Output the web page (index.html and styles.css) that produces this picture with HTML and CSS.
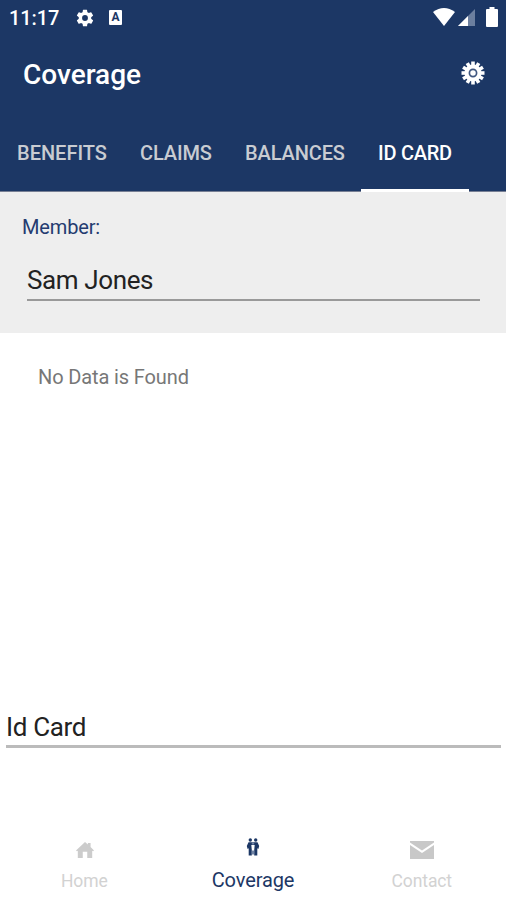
FILE: index.html
```html
<!DOCTYPE html>
<html lang="en">
<head>
<meta charset="utf-8">
<title>Coverage</title>
<link rel="stylesheet" href="styles.css">
</head>
<body>
<div class="app">
  <header class="header">
    <div class="status">
      <span class="time">11:17</span>
      <svg class="st-gear" width="20" height="20" viewBox="0 0 24 24"><path fill="#fff" fill-rule="evenodd" d="M19.4 13a7.500 7.500 0 0 0 0-2l2.100-1.650a.5.5 0 0 0 .12-.64l-2-3.460a.5.5 0 0 0-.61-.22l-2.490 1a7.300 7.300 0 0 0-1.690-.98l-.38-2.650A.49.49 0 0 0 14 2h-4a.49.49 0 0 0-.49.42l-.38 2.650c-.61.25-1.170.59-1.690.98l-2.490-1a.49.49 0 0 0-.61.22l-2 3.460a.49.49 0 0 0 .12.64L4.570 11a7.900 7.900 0 0 0 0 2l-2.110 1.650a.5.5 0 0 0-.12.64l2 3.460c.12.22.39.3.61.22l2.490-1c.52.4 1.080.73 1.690.98l.38 2.650c.03.24.24.42.49.42h4c.25 0 .46-.18.49-.42l.38-2.650c.61-.25 1.170-.59 1.690-.98l2.490 1c.23.09.49 0 .61-.22l2-3.460a.5.5 0 0 0-.12-.64zM12 15.500a3.500 3.500 0 1 1 0-7 3.500 3.500 0 0 1 0 7z"/></svg>
      <span class="badge">A</span>
      <span class="spacer"></span>
      <svg class="st-wifi" width="22" height="18" viewBox="0 0 22 18"><path fill="#fff" d="M0 4Q11-4 22 4L11 18z"/></svg>
      <svg class="st-signal" width="17" height="17" viewBox="0 0 17 17"><path fill="#6c7f9f" d="M17 0v17H0z"/><path fill="#fff" d="M10 7v10H0z"/></svg>
      <svg class="st-batt" width="12" height="20" viewBox="0 0 12 20"><path fill="#fff" d="M3.500 0h5v2H11q1 0 1 1v16q0 1-1 1H1q-1 0-1-1V3q0-1 1-1h2.500z"/></svg>
    </div>
    <div class="title-row">
      <h1 class="title">Coverage</h1>
      <svg class="settings" width="24" height="24" viewBox="-12 -12 24 24">
        <circle r="8.500" fill="#fff"/>
        <g stroke="#fff" stroke-width="3.600">
          <path d="M0-11.500V11.500"/><path d="M0-11.500V11.500" transform="rotate(30)"/><path d="M0-11.500V11.500" transform="rotate(60)"/><path d="M0-11.500V11.500" transform="rotate(90)"/><path d="M0-11.500V11.500" transform="rotate(120)"/><path d="M0-11.500V11.500" transform="rotate(150)"/>
        </g>
        <circle r="3.600" fill="#fff" stroke="#405780" stroke-width="1.700"/>
      </svg>
    </div>
    <nav class="tabs">
      <span class="tab benefits">BENEFITS</span>
      <span class="tab claims">CLAIMS</span>
      <span class="tab balances">BALANCES</span>
      <span class="tab id-card">ID CARD</span>
    </nav>
  </header>
  <section class="member">
    <div><span class="member-label">Member:</span></div>
    <div class="member-field"><span class="member-name">Sam Jones</span></div>
  </section>
  <main class="content">
    <div><span class="empty">No Data is Found</span></div>
    <div class="card-field"><span class="card-name">Id Card</span></div>
  </main>
  <footer class="bottom">
    <div class="item">
      <svg class="house" width="18" height="18" viewBox="0 0 20 18"><path fill="#ccc" d="M0 9.500L10 0l3.200 3V1.300h3v4.500L20 9.500l-1 1-1-.8V18h-5.500v-7h-5v7H2V9.700l-1 .8z"/></svg>
      <span class="label home">Home</span>
    </div>
    <div class="item active">
      <svg width="14" height="18" viewBox="0 0 14 18"><g fill="#1c3765"><circle cx="4.300" cy="2" r="1.700"/><circle cx="9.700" cy="2" r="1.700"/><path d="M2.500 4.200h9L13.200 8l-.8 3-1.100-.8V17.500H8.200V12L8.700 7H5.300l.5 5v5.500H2.700v-7.300l-1.100.8L.8 8z"/></g><path fill="#7184a5" d="M5.800 4.500h2.400v2H5.800zM5.800 12.500h2.400v4H5.800z"/></svg>
      <span class="label cov">Coverage</span>
    </div>
    <div class="item">
      <svg width="26" height="18" viewBox="0 0 26 18"><path fill="#c8c8c8" d="M1 0h24v1.500L13 9.500 1 1.500zM1 4l12 8 12-8v14H1z"/></svg>
      <span class="label contact">Contact</span>
    </div>
  </footer>
</div>
</body>
</html>
```
FILE: styles.css
```css
* { box-sizing: border-box; }
body { margin: 0; font-family: Roboto, "Liberation Sans", sans-serif; background: #fff; }
svg { display: block; flex: none; }
.app { width: 506px; height: 900px; display: flex; flex-direction: column; overflow: hidden; }
.header { height: 192px; background: #1c3765; color: #fff; border-bottom: 1px solid #777f94; }
.status { height: 36px; display: flex; align-items: center; padding: 0 8px 0 9px; }
.time { font-size: 20px; font-weight: 500; letter-spacing: -.1px; width: 66px; }
.badge { margin-left: 14px; margin-top: -1px; width: 13px; height: 15px; border-radius: 1px; background: #fff; color: #1c3765; font-size: 12px; line-height: 15px; font-weight: 700; text-align: center; }
.spacer { flex: 1; }
.st-gear { margin-top: -1px; }
.st-wifi { margin: -2px 3px 0 0; }
.st-signal { margin: -1px 11px 0 0; }
.st-batt { margin-top: -2px; }
.title-row { height: 78px; display: flex; align-items: center; justify-content: space-between; padding: 0 21px 0 23px; }
.title { margin: 0; font-size: 28px; font-weight: 500; line-height: 30px; }
.settings { margin-top: -4px; }
.tabs { height: 77px; display: flex; font-size: 20px; font-weight: 500; color: #c9ccd2; line-height: 78px; letter-spacing: -.12px; white-space: nowrap; }
.tab { padding-left: 17px; }
.benefits { width: 123px; letter-spacing: 0; }
.claims { width: 105px; }
.balances { width: 133px; }
.id-card { width: 108px; color: #fff; border-bottom: 3px solid #fff; height: 78px; letter-spacing: -.25px; }
.member { height: 141px; background: #eee; padding: 22px 26px 0 22px; }
.member-label { font-size: 20px; line-height: 26px; letter-spacing: -.15px; color: #243b70; display: inline-block; }
.member-field { margin: 16px 0 0 5px; height: 45px; border-bottom: 2px solid #999; color: #222; font-size: 26px; line-height: 49px; letter-spacing: -.38px; }
.content { flex: 1; display: flex; flex-direction: column; padding: 31px 5px 76px 6px; }
.empty { margin-left: 32px; font-size: 20px; line-height: 26px; letter-spacing: -.12px; color: #777; }
.card-field { margin-top: auto; height: 45px; border-bottom: 3px solid #bbb; color: #222; font-size: 26px; line-height: 48px; letter-spacing: -.35px; }
.bottom { height: 76px; display: grid; grid-template-columns: 168.500px 169px 168.500px; }
.item { display: flex; flex-direction: column; align-items: center; padding-top: 17px; color: #d2d2d2; }
.house { margin-left: 2px; }
.label { font-size: 17.500px; line-height: 22px; margin-top: 11px; letter-spacing: -.1px; }
.active { color: #1c3765; padding-top: 14px; }
.active .label { font-size: 20px; line-height: 26px; }
```
